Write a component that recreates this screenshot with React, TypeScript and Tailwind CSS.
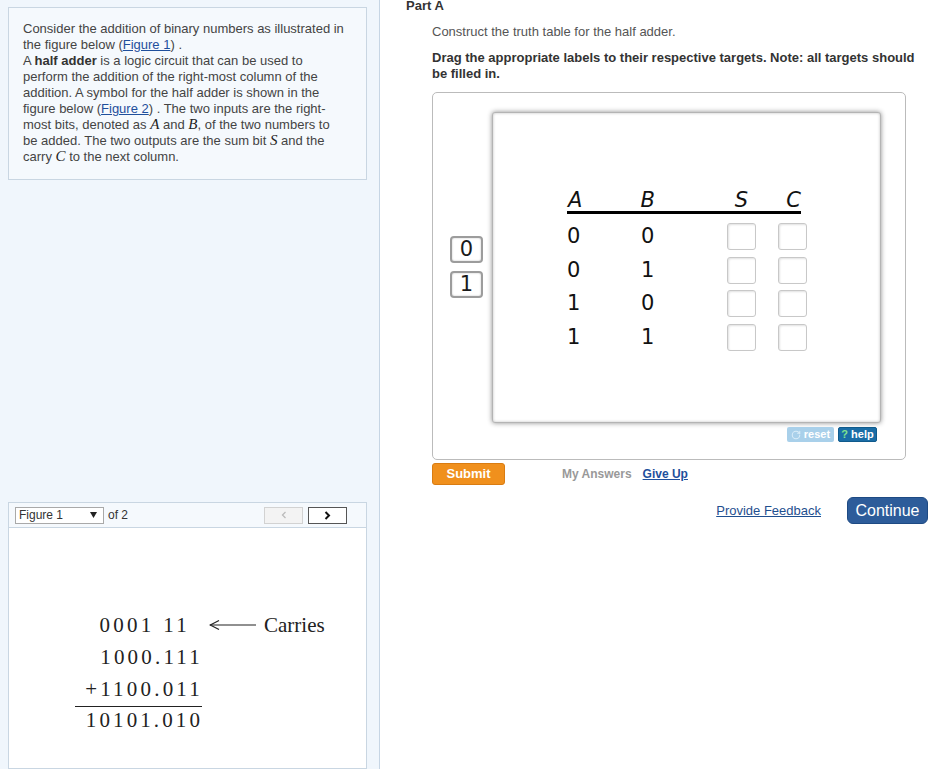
import React from "react";
import { RotateCw } from "lucide-react";

const M = ({ children }: { children: React.ReactNode }) => (
  <span className="font-['Liberation_Serif',serif] italic text-[15px] leading-none text-[#222]">{children}</span>
);

const Link = ({ children }: { children: React.ReactNode }) => (
  <span className="text-[#1f4f9c] underline">{children}</span>
);

const Target = ({ last }: { last?: boolean }) => (
  <div
    className={`w-[29px] h-[27px] border border-[#c8c8c8] rounded-[3px] bg-white shadow-[inset_1px_1px_2px_rgba(0,0,0,0.12)] ${last ? "" : "mr-[22px]"}`}
  />
);

const rows = [
  ["0", "0"],
  ["0", "1"],
  ["1", "0"],
  ["1", "1"],
];

export default function App() {
  return (
    <div className="w-[939px] h-[769px] overflow-hidden flex bg-white font-['Liberation_Sans',Arial,sans-serif]">
      {/* Left panel */}
      <div className="w-[380px] shrink-0 h-full bg-[#f0f6fc] border-r border-[#c6d5e4] pl-2 pt-[7px] flex flex-col">
        <div className="w-[359px] border border-[#c9d6e2] bg-[#f5f9fd] pl-[14px] pt-[13px] pb-[14px] text-[13px] leading-[16px] text-[#444] whitespace-nowrap">
          Consider the addition of binary numbers as illustrated in
          <br />
          the figure below (<Link>Figure 1</Link>) .
          <br />
          A <b className="text-[#333]">half adder</b> is a logic circuit that can be used to
          <br />
          perform the addition of the right-most column of the
          <br />
          addition. A symbol for the half adder is shown in the
          <br />
          figure below (<Link>Figure 2</Link>) . The two inputs are the right-
          <br />
          most bits, denoted as <M>A</M> and <M>B</M>, of the two numbers to
          <br />
          be added. The two outputs are the sum bit <M>S</M> and the
          <br />
          carry <M>C</M> to the next column.
        </div>

        <div className="mt-[322px] w-[359px] h-[25px] border-t border-x border-[#c9d6e2] bg-[#f5f9fd] flex items-center pl-[6px] pr-[19px] text-[12px] text-[#333]">
          <div className="w-[89px] h-[17px] bg-white border border-[#a9a9a9] flex items-center pl-[3px] pr-[6px] justify-between">
            <span>Figure 1</span>
            <svg width="7" height="6" viewBox="0 0 7 6">
              <polygon points="0,0 7,0 3.5,6" fill="#222" />
            </svg>
          </div>
          <span className="ml-[4px]">of 2</span>
          <div className="ml-auto w-[39px] h-[17px] bg-[#f3f3f3] border border-[#d2d2d2] flex items-center justify-center">
            <svg width="6" height="8" viewBox="0 0 6 8">
              <polyline points="4.5,1 1.5,4 4.5,7" fill="none" stroke="#bbb" strokeWidth="1.3" />
            </svg>
          </div>
          <div className="ml-[5px] w-[39px] h-[17px] bg-white border border-[#555] flex items-center justify-center">
            <svg width="7" height="9" viewBox="0 0 7 9">
              <polyline points="1.5,1 5,4.5 1.5,8" fill="none" stroke="#111" strokeWidth="2" />
            </svg>
          </div>
        </div>
        <div className="w-[359px] flex-1 border border-[#c9d6e2] bg-white pt-[81px] pl-[66px]">
          <div className="flex flex-col font-['Liberation_Serif',serif] text-[21px] text-[#222]">
            <div className="flex items-center h-[32px]">
              <span className="w-[127px] text-right pr-[12px] tracking-[3.3px] leading-[32px]">0001 11</span>
              <svg className="ml-[7px]" width="47" height="12" viewBox="0 0 47 12">
                <line x1="1" y1="6" x2="47" y2="6" stroke="#222" strokeWidth="1.2" />
                <polyline points="10,1.5 1.2,6 10,10.5" fill="none" stroke="#222" strokeWidth="1.2" />
              </svg>
              <span className="ml-[8px] leading-[32px]">Carries</span>
            </div>
            <div className="w-[128px] h-[32px] leading-[32px] text-right tracking-[3.2px]">1000.111</div>
            <div className="w-[128px] h-[33px] leading-[33px] text-right tracking-[3.2px]">+1100.011</div>
            <div className="w-[127px] border-t border-[#222]" />
            <div className="w-[128px] h-[26px] leading-[26px] text-right tracking-[3.1px]">10101.010</div>
          </div>
        </div>
      </div>

      {/* Right panel */}
      <div className="flex-1 h-full pl-[26px] flex flex-col">
        <div className="-mt-[2px] text-[13px] font-bold leading-[15px] text-[#333]">Part A</div>
        <div className="pl-[26px] flex flex-col">
          <div className="mt-[11px] text-[13px] leading-[16px] text-[#555]">
            Construct the truth table for the half adder.
          </div>
          <div className="mt-[10px] w-[490px] text-[13px] leading-[16px] font-bold text-[#333]">
            Drag the appropriate labels to their respective targets. Note: all targets should be filled in.
          </div>

          <div className="mt-[10px] w-[474px] border border-[#bbbbbb] rounded-[5px] pl-[17px] pt-[19px] pb-[17px] flex">
            <div className="w-[33px] mr-[9px] pt-[124px] flex flex-col gap-[8px]">
              {["0", "1"].map((d) => (
                <div
                  key={d}
                  className="w-[33px] h-[27px] border-2 border-[#9c9c9c] rounded-[4px] bg-white shadow-[inset_0_0_2px_rgba(0,0,0,0.25)] flex items-center justify-center font-['DejaVu_Sans',sans-serif] text-[21px] leading-none text-[#1a1a1a]"
                >
                  {d}
                </div>
              ))}
            </div>
            <div className="flex flex-col">
              <div className="w-[389px] h-[311px] border border-[#b4b4b4] rounded-[3px] bg-white shadow-[0_0_5px_rgba(0,0,0,0.45),inset_0_0_3px_rgba(0,0,0,0.25)] pl-[74px] pt-[77px]">
                <div className="flex items-end w-[234px] h-[24px] border-b-[3px] border-black font-['DejaVu_Sans',sans-serif] italic text-[21px] leading-[22px] text-[#111]">
                  <span className="w-[74px] pl-[1px]">A</span>
                  <span className="w-[95px]">B</span>
                  <span className="w-[52px]">S</span>
                  <span>C</span>
                </div>
                <div className="mt-[6px] flex flex-col">
                  {rows.map((r, i) => (
                    <div key={i} className="flex items-center h-[33.5px] font-['DejaVu_Sans',sans-serif] text-[21px] leading-none text-[#111]">
                      <span className="w-[74px]">{r[0]}</span>
                      <span className="w-[86px]">{r[1]}</span>
                      <Target />
                      <Target last />
                    </div>
                  ))}
                </div>
              </div>
              <div className="mt-[4px] h-[15px] flex justify-end gap-[4px] pr-[4px]">
                <div className="w-[47px] h-[15px] bg-[#a9d0ea] rounded-[2px] flex items-center justify-center gap-[3px] text-white text-[11px] font-bold leading-none">
                  <RotateCw size={10} strokeWidth={2.5} className="text-[#d9ecf8]" />
                  <span>reset</span>
                </div>
                <div className="w-[39px] h-[15px] bg-[#1a6da6] border border-[#0f5a8c] rounded-[2px] flex items-center justify-center gap-[3px] text-[11px] font-bold leading-none">
                  <span className="text-[#7fe28f]">?</span>
                  <span className="text-white">help</span>
                </div>
              </div>
            </div>
          </div>

          <div className="mt-[3px] flex items-center">
            <div className="w-[73px] h-[22px] bg-[#f0901d] border border-[#d97c12] rounded-[3px] flex items-center justify-center text-white text-[13px] font-bold">
              Submit
            </div>
            <span className="ml-[57px] text-[12px] font-bold text-[#999]">My Answers</span>
            <span className="ml-[11px] text-[12px] font-bold text-[#1f4f9c] underline">Give Up</span>
          </div>

          <div className="mt-[12px] flex items-center justify-end pr-[11px]">
            <span className="mr-[26px] text-[13px] text-[#1f4f8f] underline">Provide Feedback</span>
            <div className="w-[81px] h-[27px] bg-[#2d5c9a] border border-[#1e4a83] rounded-[6px] flex items-center justify-center text-white text-[16px]">
              Continue
            </div>
          </div>
        </div>
      </div>
    </div>
  );
}
